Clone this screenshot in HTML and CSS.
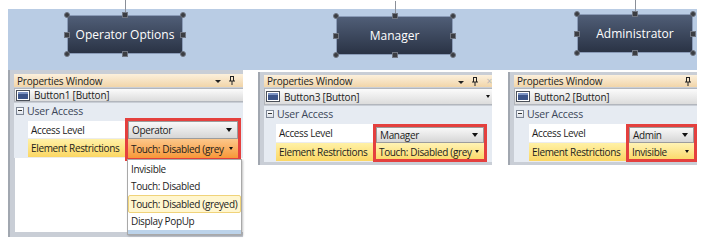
FILE: index.html
```html
<html>
<head>
	<title>User access levels</title>
	<link rel="stylesheet" href="styles.css">
</head>
<body>
	<div class="canvas">
		<div class="node node1">Operator Options
			<span class="hd c tl"></span><span class="hd tm"></span><span class="hd c tr"></span>
			<span class="hd ml"></span><span class="hd mr"></span>
			<span class="hd c bl"></span><span class="hd bm"></span><span class="hd c br"></span>
		</div>
		<div class="node node2">Manager
			<span class="hd c tl"></span><span class="hd tm"></span><span class="hd c tr"></span>
			<span class="hd ml"></span><span class="hd mr"></span>
			<span class="hd c bl"></span><span class="hd bm"></span><span class="hd c br"></span>
		</div>
		<div class="node node3">Administrator
			<span class="hd c tl"></span><span class="hd tm"></span><span class="hd c tr"></span>
			<span class="hd ml"></span><span class="hd mr"></span>
			<span class="hd c bl"></span><span class="hd bm"></span><span class="hd c br"></span>
		</div>
	</div>

	<div class="panels">
		<!-- operator -->
		<div class="panel panel1">
			<div class="title">
				<span>Properties Window</span>
				<span class="tools"><span class="caret"></span><svg class="pin" width="6" height="9" viewBox="0 0 6 9"><path d="M1 0.5h4M1.5 0.5v4.5M4.5 0.5v4.5M0 5h6M3 5v4" stroke="#222" fill="none"/></svg></span>
			</div>
			<div class="obj">
				<svg class="win" width="14" height="11" viewBox="0 0 14 11"><rect x="0.5" y="0.5" width="13" height="10" fill="#fff" stroke="#4a4f58"/><rect x="2" y="2" width="10" height="7" fill="#3c5488"/><rect x="2" y="2" width="10" height="2" fill="#7d93c2"/></svg>
				<span>Button1 [Button]</span>
			</div>
			<div class="grp"><span class="tog"></span>User Access</div>
			<div class="props">
				<div class="labels">
					<div class="label">Access Level</div>
					<div class="label warn">Element Restrictions</div>
				</div>
				<div class="values">
					<div class="val dd">Operator<span class="arr"></span></div>
					<div class="val hot">Touch: Disabled (grey<span class="arr sm"></span></div>
					<div class="list">
						<div class="item">Invisible</div>
						<div class="item">Touch: Disabled</div>
						<div class="item sel">Touch: Disabled (greyed)</div>
						<div class="item">Display PopUp</div>
						<div class="peek"><span>100%</span></div>
					</div>
				</div>
			</div>
			<div class="rest"></div>
		</div>

		<!-- manager -->
		<div class="panel panel2 tall">
			<div class="title">
				<span>Properties Window</span>
				<span class="tools"><span class="caret"></span><svg class="pin" width="6" height="9" viewBox="0 0 6 9"><path d="M1 0.5h4M1.5 0.5v4.5M4.5 0.5v4.5M0 5h6M3 5v4" stroke="#222" fill="none"/></svg><span class="x">×</span></span>
			</div>
			<div class="obj">
				<svg class="win" width="14" height="11" viewBox="0 0 14 11"><rect x="0.5" y="0.5" width="13" height="10" fill="#fff" stroke="#4a4f58"/><rect x="2" y="2" width="10" height="7" fill="#3c5488"/><rect x="2" y="2" width="10" height="2" fill="#7d93c2"/></svg>
				<span>Button3 [Button]</span>
				<span class="arr sm end"></span>
			</div>
			<div class="grp"><span class="tog"></span>User Access</div>
			<div class="props">
				<div class="labels">
					<div class="label">Access Level</div>
					<div class="label warn">Element Restrictions</div>
				</div>
				<div class="values">
					<div class="val dd">Manager<span class="arr"></span></div>
					<div class="val soft">Touch: Disabled (grey<span class="arr sm"></span></div>
				</div>
			</div>
			<div class="rest"></div>
		</div>

		<!-- administrator -->
		<div class="panel panel3 tall">
			<div class="title">
				<span>Properties Window</span>
				<span class="tools"><svg class="pin" width="6" height="9" viewBox="0 0 6 9"><path d="M1 0.5h4M1.5 0.5v4.5M4.5 0.5v4.5M0 5h6M3 5v4" stroke="#222" fill="none"/></svg></span>
			</div>
			<div class="obj">
				<svg class="win" width="14" height="11" viewBox="0 0 14 11"><rect x="0.5" y="0.5" width="13" height="10" fill="#fff" stroke="#4a4f58"/><rect x="2" y="2" width="10" height="7" fill="#3c5488"/><rect x="2" y="2" width="10" height="2" fill="#7d93c2"/></svg>
				<span>Button2 [Button]</span>
			</div>
			<div class="grp"><span class="tog"></span>User Access</div>
			<div class="props">
				<div class="labels">
					<div class="label">Access Level</div>
					<div class="label warn">Element Restrictions</div>
				</div>
				<div class="values">
					<div class="val dd">Admin<span class="arr"></span></div>
					<div class="val soft">Invisible<span class="arr sm"></span></div>
				</div>
			</div>
			<div class="rest"></div>
		</div>
	</div>
</body>
</html>
```

FILE: styles.css
```css
body {
	margin: 0;
	width: 716px;
	height: 242px;
	overflow: hidden;
	background-color: #fff;
	font-family: "Open Sans", "Noto Sans", sans-serif;
	color: #1c1c1c;
}

/* diagram strip */
.canvas {
	display: flex;
	align-items: flex-start;
	margin: 9px 0 0 8px;
	width: 689px;
	height: 61px;
	background-color: #b9cce4;
}

.node {
	position: relative;
	flex: none;
	box-sizing: border-box;
	height: 39px;
	display: flex;
	align-items: center;
	justify-content: center;
	color: #fff;
	font-size: 12px;
	background: linear-gradient(#505e77, #2a3345);
	border: 1px solid #8a9bb7;
}

.node::before {
	content: "";
	position: absolute;
	left: 50%;
	bottom: 100%;
	width: 1px;
	height: 16px;
	background-color: #8a8f98;
}

.node1 { margin: 6px 0 0 59px; width: 116px; }
.node2 { margin: 7px 0 0 153px; width: 117px; }
.node3 { margin: 5px 0 0 124px; width: 116px; }

.hd {
	position: absolute;
	width: 4px;
	height: 4px;
	background-color: #3b3d42;
	border: 1px solid #707682;
}
.hd.c { border-radius: 50%; }
.tl { left: -4px; top: -4px; }
.tm { left: calc(50% - 3px); top: -4px; }
.tr { right: -4px; top: -4px; }
.ml { left: -4px; top: calc(50% - 3px); }
.mr { right: -4px; top: calc(50% - 3px); }
.bl { left: -4px; bottom: -4px; }
.bm { left: calc(50% - 3px); bottom: -4px; }
.br { right: -4px; bottom: -4px; }

/* property panels */
.panels {
	display: flex;
	align-items: flex-start;
}

.panel {
	flex: none;
	box-sizing: border-box;
	display: flex;
	flex-direction: column;
	background-color: #c9ced6;
	border-left: 2px solid #a1a7b0;
	padding: 4px 0 5px 4px;
	font-size: 10px;
	letter-spacing: -0.35px;
}

.panel1 { margin-left: 8px; width: 235px; height: 167px; }
.panel2 { margin: 2px 0 0 15px; width: 234px; height: 93px; padding-top: 3px; padding-bottom: 3px; }
.panel3 { margin: 2px 0 0 16px; width: 189px; height: 93px; padding-top: 3px; padding-bottom: 3px; }

.title {
	height: 13px;
	display: flex;
	align-items: center;
	justify-content: space-between;
	padding-left: 3px;
	background: linear-gradient(#fcf0dc, #f1d5a9);
	line-height: 1;
	letter-spacing: -0.2px;
}

.tools {
	display: flex;
	align-items: center;
	gap: 8px;
	padding-right: 8px;
}

.caret {
	width: 0;
	height: 0;
	border-left: 3px solid transparent;
	border-right: 3px solid transparent;
	border-top: 3px solid #222;
	margin-top: 2px;
}

.panel2 .tools { padding-right: 0; gap: 8px; }
.panel3 .tools { padding-right: 6px; }

.x {
	color: #b7b7b7;
	font-size: 10px;
}

.obj {
	box-sizing: border-box;
	height: 14px;
	margin-top: 1px;
	display: flex;
	align-items: center;
	gap: 4px;
	padding-left: 1px;
	background: linear-gradient(#fbfbfb, #dcdcdc);
	border: 1px solid #b2b6bd;
	border-right: none;
	letter-spacing: -0.2px;
}

.win { flex: none; }

.obj .end { margin-left: auto; margin-right: 2px; }

.grp {
	height: 16px;
	margin-top: 1px;
	display: flex;
	align-items: center;
	gap: 3px;
	padding-left: 2px;
	background-color: #e6ebf2;
	color: #3b4658;
	font-size: 10.5px;
	letter-spacing: -0.2px;
}

.tog {
	box-sizing: border-box;
	width: 8px;
	height: 8px;
	border: 1px solid #7c8594;
	background: linear-gradient(#fff, #dde2ea);
	position: relative;
}
.tog::after {
	content: "";
	position: absolute;
	left: 1px;
	right: 1px;
	top: 2px;
	height: 1px;
	background-color: #333;
}

.props {
	display: flex;
	padding: 2px 0 0 14px;
	background-color: #e6ebf2;
}

.labels { width: 97px; flex: none; }

.label {
	box-sizing: border-box;
	height: 18px;
	display: flex;
	align-items: center;
	padding-left: 3px;
	background-color: #fff;
	border-bottom: 1px solid #ececec;
	white-space: nowrap;
}
.label + .label { height: 19px; }

.label.warn {
	background: linear-gradient(#fff1a6, #fbd764);
}

.values {
	position: relative;
	flex: 1;
	margin: 0 5px 0 3px;
	outline: 3px solid #e4403e;
}

.val {
	box-sizing: border-box;
	height: 18px;
	display: flex;
	align-items: center;
	justify-content: space-between;
	padding: 0 5px 0 3px;
	white-space: nowrap;
	overflow: hidden;
}
.val + .val { height: 19px; }

.val.dd {
	background: linear-gradient(#f8f8f8, #d6d6d6);
	border: 1px solid #9c9c9c;
}

.val.hot {
	background: linear-gradient(#fcc78b, #f79838);
}

.val.soft {
	background: linear-gradient(#fff3b4, #fbd868);
}

.arr {
	flex: none;
	width: 0;
	height: 0;
	border-left: 3.5px solid transparent;
	border-right: 3.5px solid transparent;
	border-top: 4px solid #111;
}
.arr.sm {
	border-left-width: 2px;
	border-right-width: 2px;
	border-top-width: 3px;
}

.list {
	position: absolute;
	top: calc(100% + 1px);
	left: -1px;
	width: 115px;
	box-sizing: border-box;
	background-color: #fff;
	border: 1px solid #a9a9a9;
	box-shadow: 1px 1px 2px rgba(0, 0, 0, 0.25);
	z-index: 2;
}

.item {
	box-sizing: border-box;
	height: 17.5px;
	display: flex;
	align-items: center;
	padding-left: 3px;
	white-space: nowrap;
}

.item.sel {
	background-color: #fff6cf;
	border: 1px solid #f0d37a;
	border-radius: 2px;
	padding-left: 2px;
}

.peek {
	height: 4px;
	overflow: hidden;
	background-color: #bcd3ea;
	padding-left: 3px;
	font-size: 8px;
	line-height: 12px;
	color: #6a7380;
}

.rest {
	flex: 1;
	background-color: #fff;
	margin-left: 1px;
}

/* manager / admin screenshots are a bit taller */
.tall .obj { height: 17px; }
.tall .grp { height: 17px; }
.tall .props { padding-top: 2px; }
.tall .label { height: 19px; }
.tall .val { height: 19px; }
.tall .values { outline-offset: -3px; margin: 0 5px 0 0; }
.tall .val { padding-left: 6px; padding-right: 8px; }
.tall .val.dd { margin: 3px 3px 0 3px; height: 16px; padding-left: 3px; padding-right: 5px; }
.tall .val.soft { margin: 0 3px; height: 17px; padding-left: 3px; padding-right: 5px; }
.tall .rest { background-color: #dfe6f0; margin-left: 0; }

.panel2 .labels { margin-left: -2px; }
.panel3 .props { padding-left: 15px; }
.panel3 .values { margin-right: 0; }
.panel3 .labels { width: 97px; }
```
